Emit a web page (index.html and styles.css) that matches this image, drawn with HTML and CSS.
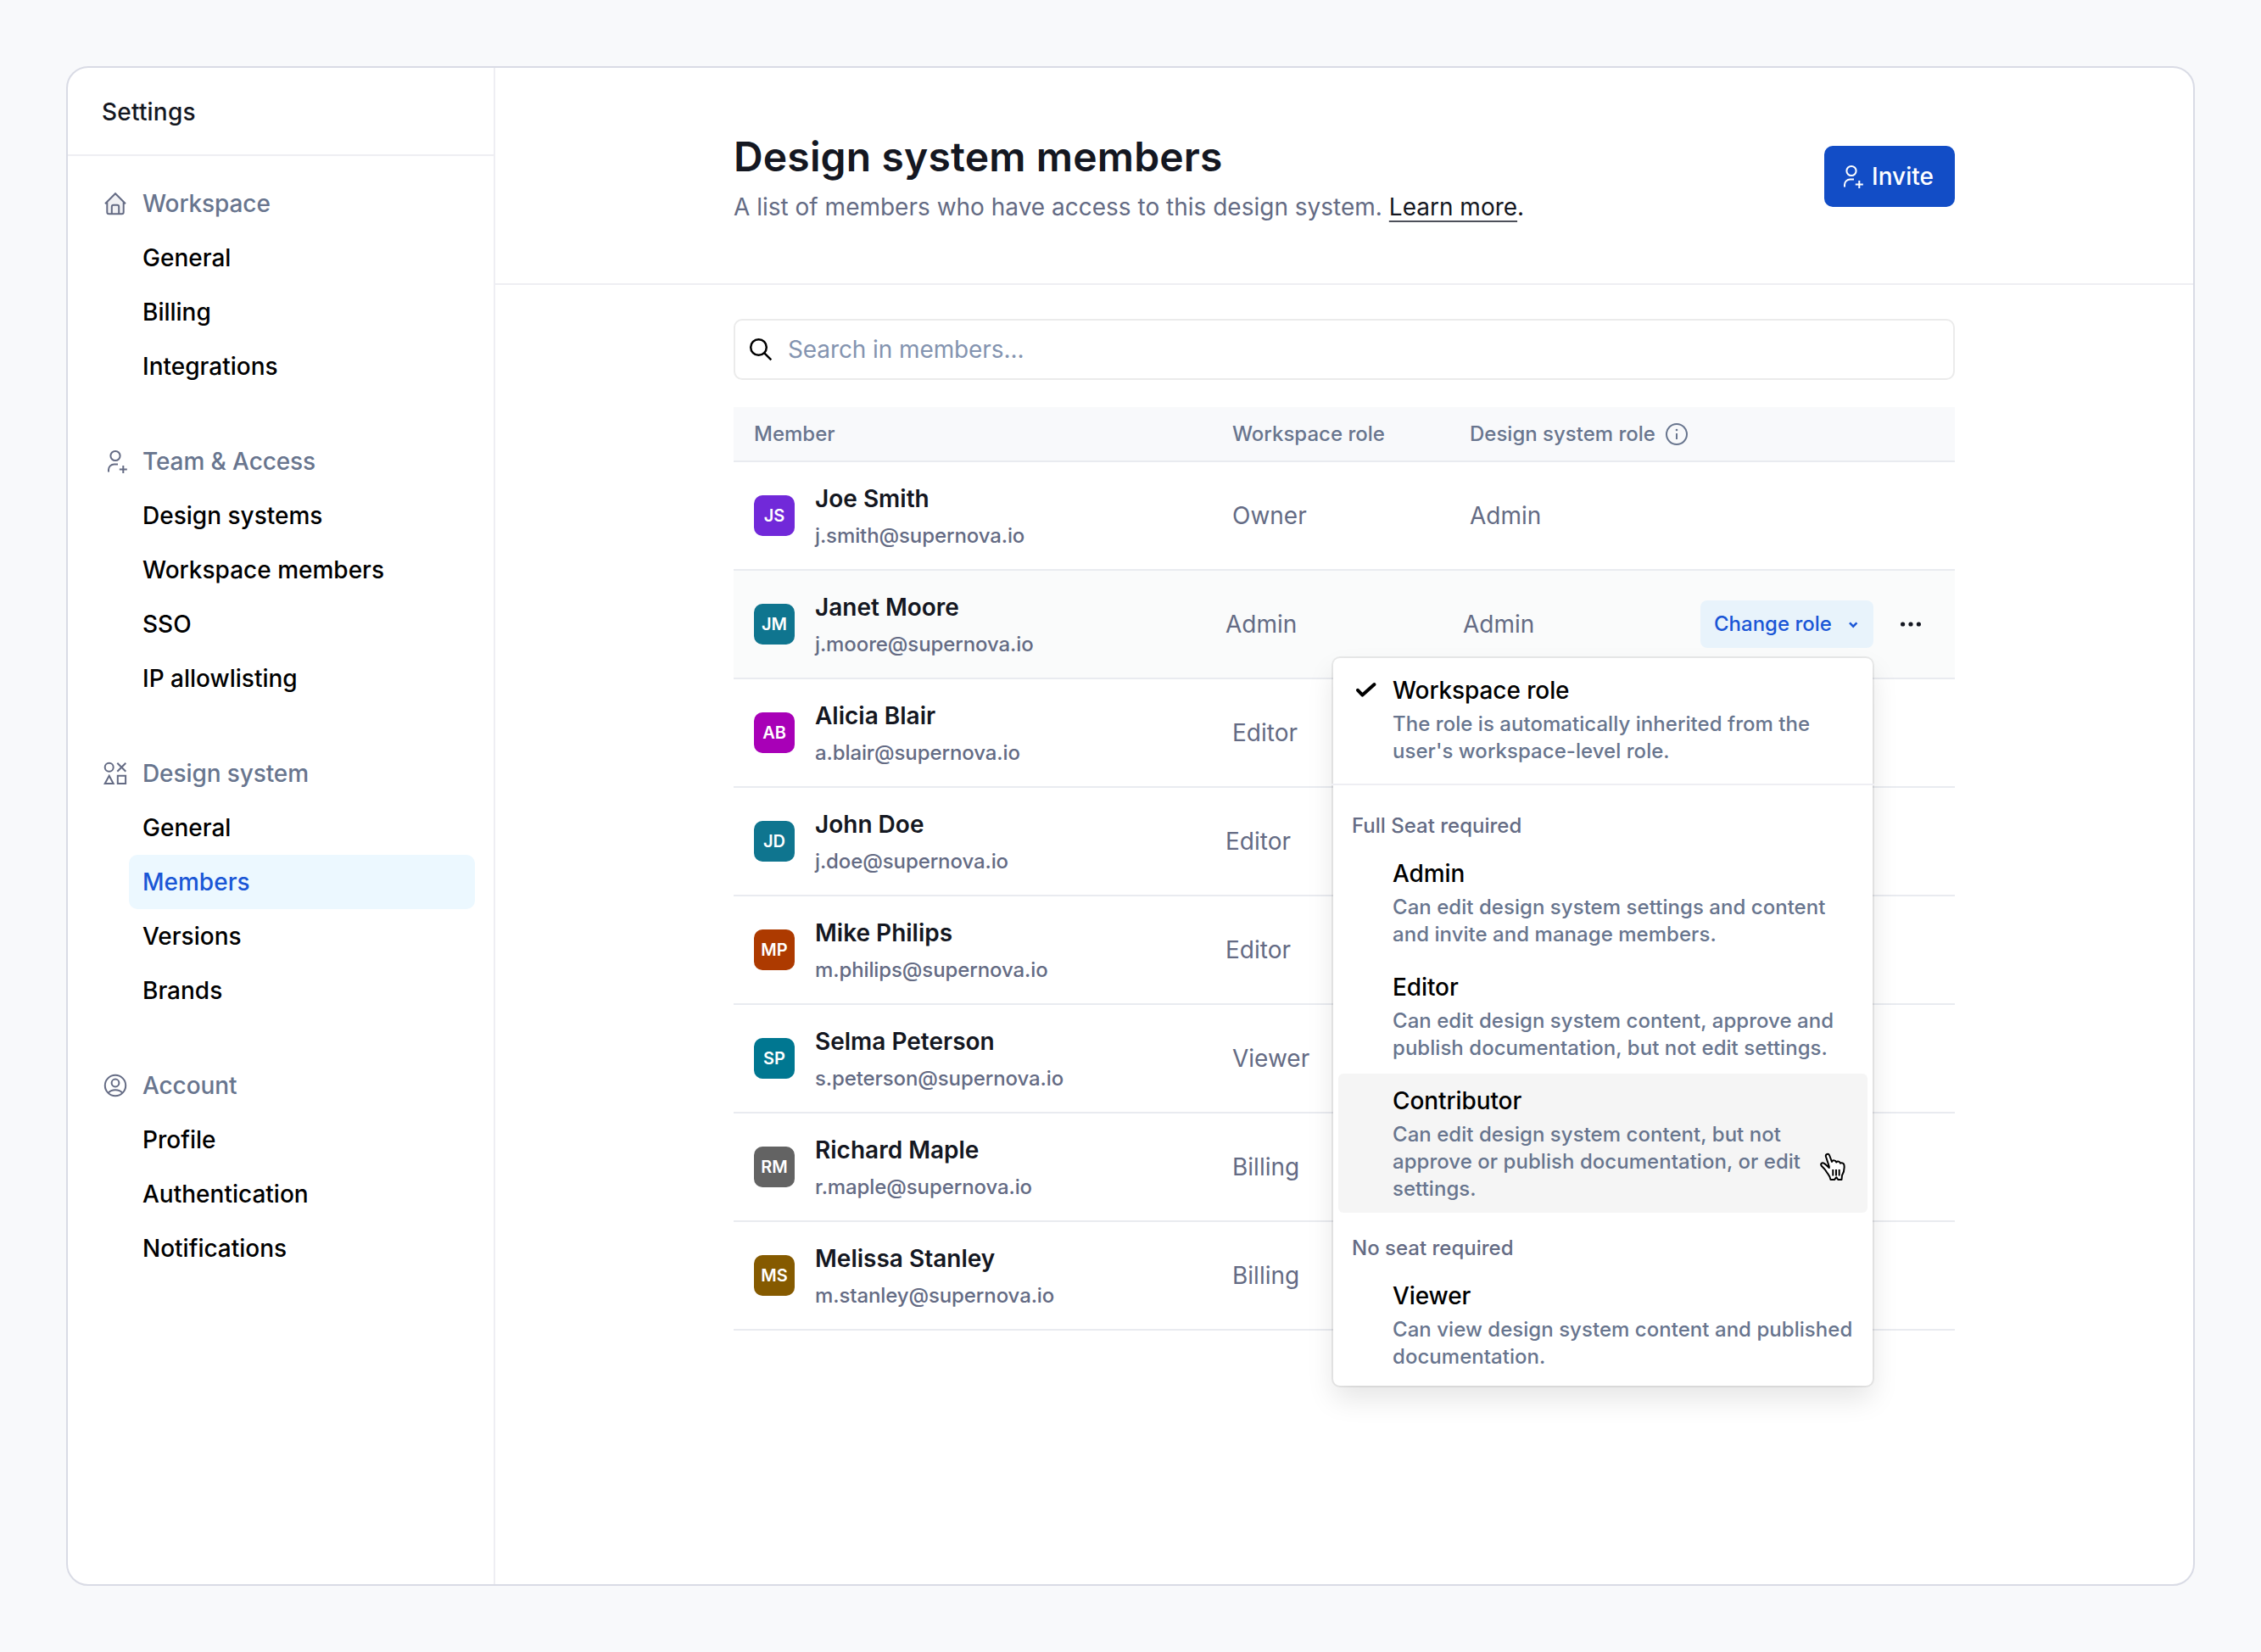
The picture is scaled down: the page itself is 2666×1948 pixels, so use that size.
FILE: index.html
```
<!DOCTYPE html>
<html lang="en">
<head>
    <meta charset="utf-8">
    <title>Design system members</title>
    <link rel="stylesheet" href="styles.css">
</head>
<body>
    <!-- shared icons -->
    <svg width="0" height="0" class="sprite">
        <symbol id="user-plus" viewBox="0 0 32 32">
            <circle cx="16" cy="9.5" r="5.6"/>
            <path d="M8 28.5v-2.5a6.5 6.5 0 0 1 6.5-6.5h4.5M25.3 21v9M20.8 25.5h9"/>
        </symbol>
    </svg>

    <div class="window">
        <aside class="sidebar">
            <div class="sidebar-title">Settings</div>
            <nav>
                <section>
                    <h2>
                        <svg class="icon" viewBox="0 0 32 32"><path d="M6.5 14.5v11.8a2 2 0 0 0 2 2h15a2 2 0 0 0 2-2V14.5L16 4.5z" fill="#f1f1f4" stroke="none"/><path d="M4 16.3 16 4.2l12 12.1M6.3 14.5v11.8a2 2 0 0 0 2 2h15.4a2 2 0 0 0 2-2V14.5M11.8 28v-8.2a2 2 0 0 1 2-2h4.4a2 2 0 0 1 2 2V28"/></svg>
                        Workspace
                    </h2>
                    <ul>
                        <li>General</li>
                        <li>Billing</li>
                        <li>Integrations</li>
                    </ul>
                </section>
                <section>
                    <h2>
                        <svg class="icon"><use href="#user-plus"/></svg>
                        Team &amp; Access
                    </h2>
                    <ul>
                        <li>Design systems</li>
                        <li>Workspace members</li>
                        <li>SSO</li>
                        <li>IP allowlisting</li>
                    </ul>
                </section>
                <section>
                    <h2>
                        <svg class="icon" viewBox="0 0 32 32"><circle cx="8.7" cy="8.7" r="5"/><path d="M18.3 3.7l10 10M28.3 3.7l-10 10M8.7 18.8l5 9.3h-10zM18.8 18.8h9.3v9.3h-9.3z"/></svg>
                        Design system
                    </h2>
                    <ul>
                        <li>General</li>
                        <li class="active">Members</li>
                        <li>Versions</li>
                        <li>Brands</li>
                    </ul>
                </section>
                <section>
                    <h2>
                        <svg class="icon" viewBox="0 0 32 32"><circle cx="16" cy="16" r="12.2"/><circle cx="16" cy="13" r="4.4"/><path d="M7.6 24.8c2-2.4 5-3.6 8.4-3.6s6.4 1.2 8.4 3.6"/></svg>
                        Account
                    </h2>
                    <ul>
                        <li>Profile</li>
                        <li>Authentication</li>
                        <li>Notifications</li>
                    </ul>
                </section>
            </nav>
        </aside>

        <main>
            <header class="page-header">
                <div class="content header-content">
                    <div>
                        <h1>Design system members</h1>
                        <p>A list of members who have access to this design system. <span class="learn"><a>Learn more</a>.</span></p>
                    </div>
                    <button class="invite"><svg class="icon"><use href="#user-plus"/></svg>Invite</button>
                </div>
            </header>

            <div class="content">
                <div class="search">
                    <svg class="icon" viewBox="0 0 32 32"><circle cx="13.5" cy="13.5" r="9.3"/><path d="M20.3 20.3l8 8"/></svg>
                    Search in members...
                </div>

                <div class="table">
                    <div class="row head">
                        <div>Member</div>
                        <div>Workspace role</div>
                        <div class="with-icon">Design system role
                            <svg class="icon" viewBox="0 0 32 32"><circle cx="16" cy="16" r="12"/><path d="M16 15v7"/><circle cx="16" cy="11" r="1.3" class="dot"/></svg>
                        </div>
                    </div>

                    <div class="row">
                        <div class="member">
                            <span class="avatar purple">JS</span>
                            <div><div class="name">Joe Smith</div><div class="email">j.smith@supernova.io</div></div>
                        </div>
                        <div>Owner</div>
                        <div>Admin</div>
                    </div>
                    <div class="row hover editable">
                        <div class="member">
                            <span class="avatar teal">JM</span>
                            <div><div class="name">Janet Moore</div><div class="email">j.moore@supernova.io</div></div>
                        </div>
                        <div>Admin</div>
                        <div>Admin</div>
                        <div class="actions">
                            <button class="change">Change role <svg viewBox="0 0 16 16"><path d="M4 6.3l4.2 4.4 4.2-4.4"/></svg></button>
                            <svg class="more" viewBox="0 0 32 32"><circle cx="6.6" cy="16" r="2.6"/><circle cx="16" cy="16" r="2.6"/><circle cx="25.4" cy="16" r="2.6"/></svg>

                            <div class="menu">
                                <div class="option first">
                                    <svg class="check" viewBox="0 0 32 32"><path d="M7 15.8l5.5 5.8L26.5 9"/></svg>
                                    <strong>Workspace role</strong>
                                    <p>The role is automatically inherited from the user's workspace-level role.</p>
                                </div>
                                <hr>
                                <div class="menu-label">Full Seat required</div>
                                <div class="option">
                                    <strong>Admin</strong>
                                    <p>Can edit design system settings and content and invite and manage members.</p>
                                </div>
                                <div class="option">
                                    <strong>Editor</strong>
                                    <p>Can edit design system content, approve and publish documentation, but not edit settings.</p>
                                </div>
                                <div class="option selected">
                                    <strong>Contributor</strong>
                                    <p>Can edit design system content, but not<br>approve or publish documentation, or edit settings.</p>
                                    <svg class="cursor" viewBox="0 0 32 36"><path d="M12.8 17.5 9 6C8 3 12 1.5 13.2 4.5L16 12c1-2.5 4.5-2 5.2.5 1.5-1.8 4.3-1 4.8 1.200 2-1.200 4.300 0 4.500 2.300.5 4-.5 8.500-2.500 12l-.5 5h-4.200l-2-2.800-2.300 2.800h-4.500c-.5-4.500-3-6-5-9.500-1.500-3-3.500-4.500-5.500-6.500-2.500-3 .8-4.500 3-3 2 1 3.500 3 5.800 5z"/><path d="M17.3 21v7.5M21 21v7.5M24.7 21v7.5"/></svg>
                                </div>
                                <div class="menu-label none">No seat required</div>
                                <div class="option">
                                    <strong>Viewer</strong>
                                    <p>Can view design system content and published documentation.</p>
                                </div>
                            </div>
                        </div>
                    </div>
                    <div class="row">
                        <div class="member">
                            <span class="avatar magenta">AB</span>
                            <div><div class="name">Alicia Blair</div><div class="email">a.blair@supernova.io</div></div>
                        </div>
                        <div>Editor</div>
                    </div>
                    <div class="row editable">
                        <div class="member">
                            <span class="avatar teal">JD</span>
                            <div><div class="name">John Doe</div><div class="email">j.doe@supernova.io</div></div>
                        </div>
                        <div>Editor</div>
                    </div>
                    <div class="row editable">
                        <div class="member">
                            <span class="avatar rust">MP</span>
                            <div><div class="name">Mike Philips</div><div class="email">m.philips@supernova.io</div></div>
                        </div>
                        <div>Editor</div>
                    </div>
                    <div class="row">
                        <div class="member">
                            <span class="avatar cyan">SP</span>
                            <div><div class="name">Selma Peterson</div><div class="email">s.peterson@supernova.io</div></div>
                        </div>
                        <div>Viewer</div>
                    </div>
                    <div class="row">
                        <div class="member">
                            <span class="avatar gray">RM</span>
                            <div><div class="name">Richard Maple</div><div class="email">r.maple@supernova.io</div></div>
                        </div>
                        <div>Billing</div>
                    </div>
                    <div class="row">
                        <div class="member">
                            <span class="avatar brown">MS</span>
                            <div><div class="name">Melissa Stanley</div><div class="email">m.stanley@supernova.io</div></div>
                        </div>
                        <div>Billing</div>
                    </div>
                </div>
            </div>
        </main>
    </div>
</body>
</html>
```
FILE: styles.css
```
* {
    box-sizing: border-box;
    margin: 0;
    padding: 0;
}

body {
    height: 1948px;
    padding: 78px;
    background-color: #f8f9fb;
    font-family: Inter, "Liberation Sans", sans-serif;
    font-size: 28px;
    color: #141721;
}

.sprite {
    position: absolute;
}

.window {
    display: flex;
    width: 2510px;
    height: 1792px;
    background-color: #fff;
    border: 2px solid #d9dbe5;
    border-radius: 26px;
}

.icon {
    width: 32px;
    height: 32px;
    flex: none;
    fill: none;
    stroke: currentColor;
    stroke-width: 2;
}

button {
    font-family: inherit;
    border: none;
    cursor: pointer;
}

/* Sidebar */

.sidebar {
    width: 504px;
    border-right: 2px solid #eeeef3;
    font-weight: 500;
}

.sidebar-title {
    height: 104px;
    padding-left: 40px;
    line-height: 104px;
    letter-spacing: 0.2px;
    border-bottom: 2px solid #eeeef3;
}

nav {
    padding: 24px 22px 0 40px;
}

nav section {
    margin-bottom: 48px;
}

nav h2 {
    display: flex;
    align-items: center;
    gap: 16px;
    height: 64px;
    font-size: 28px;
    font-weight: 500;
    letter-spacing: -0.1px;
    color: #68758e;
}

nav h2 .icon {
    color: #646b84;
}

nav ul {
    list-style-type: none;
    margin-left: 32px;
}

nav li {
    height: 64px;
    padding-left: 16px;
    line-height: 64px;
    color: #000;
    border-radius: 10px;
}

nav li.active {
    background-color: #ecf8ff;
    color: #1a56d6;
}

/* Main */

main {
    flex: 1;
}

.content {
    width: 1440px;
    margin: 0 auto;
}

.page-header {
    height: 256px;
    padding-top: 72px;
    border-bottom: 2px solid #eeeef3;
}

.header-content {
    display: flex;
    justify-content: space-between;
}

h1 {
    margin-top: 5px;
    font-size: 48px;
    font-weight: 600;
    line-height: 56px;
    letter-spacing: 0.16px;
}

.header-content p {
    margin-top: 13px;
    line-height: 36px;
    color: #646b84;
}

.learn {
    color: #141721;
}

.learn a {
    text-decoration: underline 2px #4d505a;
    text-underline-offset: 6px;
}

.invite {
    display: flex;
    align-items: center;
    gap: 8px;
    width: 154px;
    height: 72px;
    margin-top: 20px;
    padding-left: 16px;
    background-color: #124dc6;
    color: #fff;
    font-size: 28px;
    font-weight: 500;
    border-radius: 10px;
}

.search {
    display: flex;
    align-items: center;
    gap: 16px;
    height: 72px;
    margin-top: 40px;
    padding-left: 14px;
    border: 2px solid #ebebeb;
    border-radius: 10px;
    letter-spacing: -0.1px;
    color: #8494b0;
}

.search .icon {
    color: #000;
    stroke-width: 2.5;
}

/* Table */

.table {
    margin-top: 32px;
}

.row {
    display: grid;
    grid-template-columns: 564px 280px 272px 1fr;
    align-items: center;
    height: 128px;
    padding-left: 24px;
    border-bottom: 2px solid #e9ebf0;
    color: #646b84;
}

.row.head {
    height: 65px;
    background-color: #f8f9fb;
    font-size: 24px;
    font-weight: 500;
    color: #68758e;
}

.row.hover {
    background-color: #fafbfb;
}

.row.editable {
    grid-template-columns: 556px 280px 280px 1fr;
}

.with-icon {
    display: flex;
    align-items: center;
    gap: 9px;
    white-space: nowrap;
}

.dot {
    fill: currentColor;
    stroke: none;
}

.member {
    display: flex;
    align-items: center;
    gap: 24px;
}

.avatar {
    width: 48px;
    height: 48px;
    border-radius: 10px;
    color: #fff;
    font-size: 20px;
    font-weight: 600;
    line-height: 48px;
    text-align: center;
}

.purple { background-color: #7129d9; }
.teal { background-color: #0f758f; }
.magenta { background-color: #a800b7; }
.rust { background-color: #ad3a00; }
.cyan { background-color: #007791; }
.gray { background-color: #636363; }
.brown { background-color: #855a00; }

.name {
    margin-top: 3px;
    font-weight: 600;
    line-height: 40px;
    color: #141721;
}

.email {
    margin-top: 4px;
    font-size: 24px;
    font-weight: 500;
    line-height: 40px;
    letter-spacing: -0.1px;
}

.actions {
    position: relative;
    display: flex;
    align-items: center;
    gap: 28px;
}

.change {
    display: flex;
    align-items: center;
    justify-content: space-between;
    width: 204px;
    height: 56px;
    padding: 0 16px 1px;
    background-color: #e8f3fb;
    color: #1a56d6;
    font-size: 24px;
    font-weight: 500;
    border-radius: 8px;
}

.change svg {
    width: 16px;
    height: 16px;
    fill: none;
    stroke: currentColor;
    stroke-width: 2.4;
}

.more {
    width: 32px;
    height: 32px;
    fill: #141721;
}

/* Role menu */

.menu {
    position: absolute;
    top: 68px;
    right: 97px;
    z-index: 1;
    width: 636px;
    padding: 6px;
    background-color: #fff;
    border-radius: 8px;
    box-shadow: 0 0 0 2px rgba(0, 0, 0, 0.07), 0 16px 32px rgba(0, 0, 0, 0.1);
}

.option {
    position: relative;
    padding: 12px 8px 12px 64px;
    margin-bottom: 2px;
    border-radius: 6px;
}

.option:last-child {
    margin-bottom: 0;
}

.option.first {
    margin-bottom: 10px;
}

.option.selected {
    background-color: #f5f5f5;
}

.option strong {
    display: block;
    font-weight: 500;
    line-height: 40px;
    letter-spacing: -0.1px;
    color: #000;
}

.option p {
    margin-top: 4px;
    font-size: 24px;
    font-weight: 500;
    line-height: 32px;
    letter-spacing: 0.04px;
    color: #68758e;
}

.check {
    position: absolute;
    top: 16px;
    left: 16px;
    width: 32px;
    height: 32px;
    fill: none;
    stroke: #000;
    stroke-width: 4;
    stroke-linecap: round;
    stroke-linejoin: round;
}

.menu hr {
    height: 2px;
    margin: 0 -8px 24px;
    border: none;
    background-color: #eeeef3;
}

.menu-label {
    padding-left: 16px;
    font-size: 24px;
    font-weight: 500;
    line-height: 48px;
}

.menu-label.none {
    margin-top: 18px;
}

.cursor {
    position: absolute;
    top: 92px;
    right: 26px;
    width: 32px;
    height: 36px;
    fill: #fff;
    stroke: #000;
    stroke-width: 2;
    stroke-linejoin: round;
}
```
